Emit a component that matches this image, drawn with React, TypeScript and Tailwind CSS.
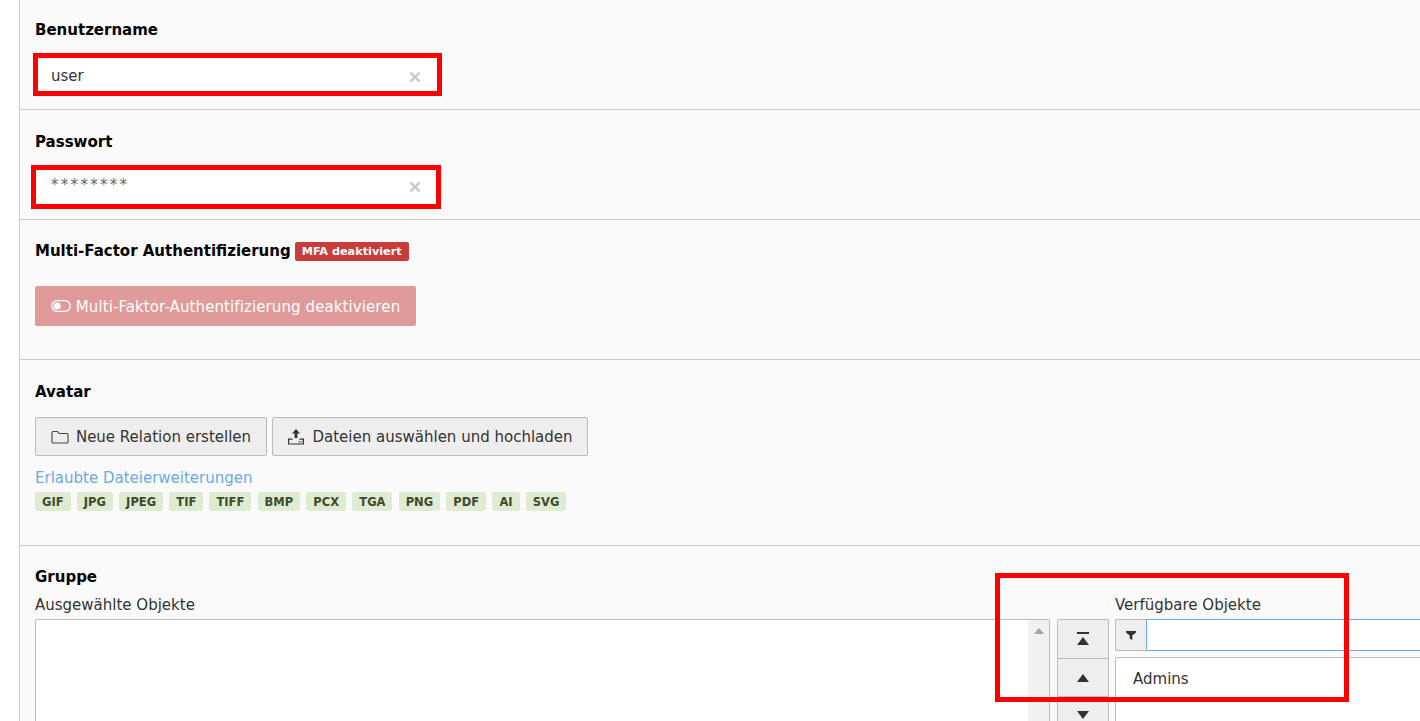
import React from "react";

const extensions = ["GIF", "JPG", "JPEG", "TIF", "TIFF", "BMP", "PCX", "TGA", "PNG", "PDF", "AI", "SVG"];

function ClearIcon() {
  return (
    <svg width="10" height="10" viewBox="0 0 10 10" className="mt-[2px] shrink-0">
      <path d="M0.500 0.500l9 9M9.500 0.500l-9 9" stroke="#c8c8c8" strokeWidth="2.500" fill="none" />
    </svg>
  );
}

function TextField({ value, mask }: { value: string; mask?: boolean }) {
  return (
    <div className="flex h-[32px] w-[405px] items-center justify-between bg-white pl-[16px] pr-[20px] text-[15px] text-[#333]">
      <span className={mask ? "-mt-[1px] tracking-[2.3px] text-[#666]" : "mt-[1px]"}>{value}</span>
      <ClearIcon />
    </div>
  );
}

function FolderIcon() {
  return (
    <svg width="18" height="14" viewBox="0 0 18 14" fill="none" stroke="#444" strokeWidth="1.1">
      <path d="M1 2.5V12a1 1 0 0 0 1 1h14a1 1 0 0 0 1-1V4.5a1 1 0 0 0-1-1H8L6.5 1.5H2a1 1 0 0 0-1 1z" />
    </svg>
  );
}

function UploadIcon() {
  return (
    <svg width="18" height="16" viewBox="0 0 18 16" fill="#333">
      <path d="M9 0l4 4.5h-2.6V9H7.600V4.500H5z" />
      <path d="M1 9.500h4.500v1.200H2.200v3.800h13.600v-3.800h-3.300V9.500H17v6H1z" fillRule="evenodd" />
      <rect x="11.500" y="12.200" width="1.200" height="1.200" />
      <rect x="13.600" y="12.200" width="1.200" height="1.200" />
    </svg>
  );
}

function ToggleIcon() {
  return (
    <svg width="20" height="12" viewBox="0 0 20 12" fill="none">
      <rect x="0.700" y="0.700" width="18.600" height="10.600" rx="5.300" stroke="#fff" strokeWidth="1.200" />
      <circle cx="6" cy="6" r="3.600" fill="#fff" />
    </svg>
  );
}

function Button({ children, width }: { children: React.ReactNode; width: string }) {
  return (
    <div className={`flex h-[39px] items-center justify-center gap-[7px] rounded-[2px] border border-[#bbb] bg-[#eee] text-[15px] text-[#333] ${width}`}>
      {children}
    </div>
  );
}

function MoveButton({ children, height, last }: { children: React.ReactNode; height: string; last?: boolean }) {
  return (
    <div className={`flex w-[52px] shrink-0 items-center justify-center border-x border-t border-[#bbb] bg-[#eee] first:rounded-t-[2px] ${height} ${last ? "border-b" : ""}`}>
      {children}
    </div>
  );
}

function App() {
  return (
    <div
      className="relative h-[721px] w-[1420px] overflow-hidden bg-white text-[15px] text-[#333]"
      style={{ fontFamily: '"DejaVu Sans", Verdana, sans-serif' }}
    >
      <div className="ml-[19px] h-full border-l border-[#ccc] bg-[#fafafa]">
        <section className="h-[110px] border-b border-[#ccc] pl-[15px] pt-[21px]">
          <h2 className="mb-[21px] h-[18px] text-[15px] leading-[19px] font-bold text-black">Benutzername</h2>
          <TextField value="user" />
        </section>

        <section className="h-[110px] border-b border-[#ccc] pl-[15px] pt-[22px]">
          <h2 className="mb-[20px] h-[18px] text-[15px] leading-[20px] font-bold text-black">Passwort</h2>
          <TextField value="********" mask />
        </section>

        <section className="h-[140px] border-b border-[#ccc] pl-[15px] pt-[22px]">
          <div className="flex h-[18px] items-center gap-[4px]">
            <h2 className="text-[15px] leading-[18px] font-bold text-black">Multi-Factor Authentifizierung</h2>
            <span className="rounded-[2px] bg-[#c83c3c] px-[7px] py-[3px] text-[11.25px] leading-[13px] font-bold text-white">
              MFA deaktiviert
            </span>
          </div>
          <div className="mt-[26px] flex h-[40px] w-[381px] items-center justify-center gap-[5px] rounded-[2px] border border-[#dc9c9c] bg-[#e09a9a] text-[15px] text-white">
            <ToggleIcon />
            <span className="mt-[2px] tracking-[0.1px]">Multi-Faktor-Authentifizierung deaktivieren</span>
          </div>
        </section>

        <section className="h-[186px] border-b border-[#ccc] pl-[15px] pt-[22px]">
          <h2 className="h-[18px] text-[15px] leading-[20px] font-bold text-black">Avatar</h2>
          <div className="mt-[17px] flex gap-[5px]">
            <Button width="w-[232px]">
              <FolderIcon />
              <span className="mt-[2px]">Neue Relation erstellen</span>
            </Button>
            <Button width="w-[316px]">
              <UploadIcon />
              <span className="mt-[2px]">Dateien auswählen und hochladen</span>
            </Button>
          </div>
          <p className="mt-[12px] h-[18px] text-[15px] leading-[20px] text-[#6daae0]">Erlaubte Dateierweiterungen</p>
          <div className="mt-[6px] flex gap-[6.2px]">
            {extensions.map((ext) => (
              <span key={ext} className="rounded-[2px] bg-[#dfebd3] px-[7px] pt-[4px] pb-[2px] text-[11.5px] leading-[13px] font-bold text-[#3d4a2c]">
                {ext}
              </span>
            ))}
          </div>
        </section>

        <section className="pl-[15px] pt-[21px]">
          <h2 className="h-[18px] text-[15px] leading-[20px] font-bold text-black">Gruppe</h2>
          <div className="mt-[10px] flex">
            <div className="w-[1015px] shrink-0">
              <p className="h-[18px] leading-[20px]">Ausgewählte Objekte</p>
              <div className="mt-[6px] flex h-[140px] rounded-t-[2px] border border-[#bbb] bg-white">
                <div className="flex-1" />
                <div className="flex w-[21px] justify-center bg-[#f1f1f1] pt-[8px]">
                  <svg width="10" height="6" viewBox="0 0 10 6"><path d="M5 0l5 6H0z" fill="#a3a3a3" /></svg>
                </div>
              </div>
            </div>
            <div className="ml-[7px] flex flex-col pt-[24px]">
              <MoveButton height="h-[39px]">
                <svg width="12" height="14" viewBox="0 0 12 14" fill="#333"><rect width="12" height="2" x="0" y="0" /><path d="M6 5l6 8H0z" /></svg>
              </MoveButton>
              <MoveButton height="h-[38px]">
                <svg width="12" height="8" viewBox="0 0 12 8" fill="#333"><path d="M6 0l6 8H0z" /></svg>
              </MoveButton>
              <MoveButton height="h-[38px]" last>
                <svg width="12" height="8" viewBox="0 0 12 8" fill="#333"><path d="M6 8L0 0h12z" /></svg>
              </MoveButton>
            </div>
            <div className="ml-[6px] w-[1015px] shrink-0">
              <p className="h-[18px] leading-[20px]">Verfügbare Objekte</p>
              <div className="mt-[6px] flex h-[32px]">
                <div className="flex w-[31px] items-center justify-center rounded-l-[2px] border-y border-l border-[#bbb] bg-[#eee]">
                  <svg width="10" height="9" viewBox="0 0 10 9" fill="#333"><path d="M0 0h10v1.500L6.300 4.500V9L3.700 7.500v-3L0 1.500z" /></svg>
                </div>
                <div className="flex-1 border border-[#6daae0] bg-white" />
              </div>
              <div className="mt-[6px] h-[80px] rounded-t-[2px] border border-[#bbb] bg-white pl-[17px] pt-[10px]">Admins</div>
            </div>
          </div>
        </section>
      </div>

      {/* red annotation boxes drawn over the screenshot */}
      <div className="absolute left-[33px] top-[53px] h-[43px] w-[409px] border-[5px] border-[#ff0000]" />
      <div className="absolute left-[31px] top-[165px] h-[44px] w-[410px] border-[5px] border-[#ff0000]" />
      <div className="absolute left-[995px] top-[573px] h-[129px] w-[354px] border-[5px] border-[#ff0000]" />
    </div>
  );
}

export default App;
